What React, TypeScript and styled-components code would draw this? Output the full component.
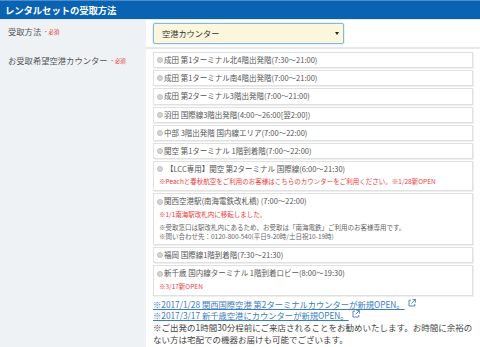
import * as React from "react";
import styled, { createGlobalStyle } from "styled-components";

const GlobalStyle = createGlobalStyle`
  html, body {
    margin: 0;
    padding: 0;
    background: #ffffff;
  }
  body {
    font-family: "Noto Sans CJK JP", "Noto Sans", sans-serif;
    color: #555;
  }
`;

const Page = styled.div`
  width: 480px;
  height: 347px;
  overflow: hidden;
  background: #fff;
`;

const Header = styled.div`
  height: 18px;
  border-top: 1px solid #4c8dcc;
  background: #0a63b2;
  color: #fff;
  font-size: 9.4px;
  font-weight: bold;
  line-height: 18px;
  padding-left: 5px;
  letter-spacing: -0.1px;
`;

const Row = styled.div<{ $first?: boolean }>`
  display: grid;
  grid-template-columns: 146px 1fr;
  border-top: ${(p) => (p.$first ? "1px solid #e6e9ec" : "2px solid #e6e9ec")};
`;

const Label = styled.div<{ $top: number }>`
  background: #eef2f5;
  padding: ${(p) => p.$top}px 0 0 8px;
  font-size: 8.3px;
  line-height: 12px;
  color: #555;
  min-height: 100%;
`;

const Required = styled.span`
  color: #e8302f;
  font-size: 5.4px;
  margin-left: 2px;
  vertical-align: 1px;
`;

const Cell = styled.div<{ $pad: string }>`
  padding: ${(p) => p.$pad};
`;

const Select = styled.div`
  position: relative;
  width: 181px;
  height: 19px;
  border: 1px solid #86b6e6;
  border-radius: 2px;
  box-shadow: 0 0 2px #a9cdf0;
  background: #fcf7dc;
  font-size: 8.2px;
  line-height: 19px;
  padding-left: 8px;
  color: #333;
  &::after {
    content: "";
    position: absolute;
    right: 4px;
    top: 8px;
    border-left: 2px solid transparent;
    border-right: 2px solid transparent;
    border-top: 3px solid #222;
  }
`;

const List = styled.div`
  display: flex;
  flex-direction: column;
  gap: 2px;
  width: 320px;
`;

const Box = styled.div`
  border: 1px solid #e0e0e0;
  box-shadow: 1px 1px 0 #efefef;
  background: #fff;
  padding: 0 0 0 3px;
`;

const Main = styled.div`
  display: flex;
  align-items: center;
  font-size: 7.5px;
  line-height: 14.2px;
  color: #555;
  white-space: nowrap;
`;

const Radio = styled.span<{ $spaced?: boolean }>`
  display: inline-block;
  width: 4px;
  height: 4px;
  border-radius: 50%;
  background: #d6d6d6;
  border: 1px solid #bdbdbd;
  margin-right: ${(p) => (p.$spaced ? "3px" : "1px")};
  flex: none;
`;

const RedNote = styled.div`
  color: #ea3b3b;
  font-size: 6.5px;
  line-height: 11px;
  padding-left: 2px;
  padding-bottom: 3px;
  white-space: nowrap;
`;

const GrayNotes = styled.div`
  color: #666;
  font-size: 6.5px;
  line-height: 9.3px;
  padding: 3px 0 3px 2px;
  white-space: nowrap;
`;

const Links = styled.div`
  margin-top: 3px;
  font-size: 8.3px;
  line-height: 11px;
`;

const Link = styled.a`
  display: block;
  color: #3b7cc0;
  text-decoration: underline;
  white-space: nowrap;
`;

const Note = styled.div`
  font-size: 8.5px;
  line-height: 12.5px;
  color: #444;
  width: 322px;
`;

const Ext = () => (
  <svg width="8" height="8" viewBox="0 0 8 8" style={{ marginLeft: 3, verticalAlign: 1 }}>
    <path d="M3 1.2H1v5.8h5.8V5" fill="none" stroke="#3b7cc0" strokeWidth="0.9" />
    <path d="M4.4 0.6h3v3M7.3 0.7L3.6 4.4" fill="none" stroke="#3b7cc0" strokeWidth="0.9" />
  </svg>
);

const simple1 = [
  "成田 第1ターミナル北4階出発階(7:30～21:00)",
  "成田 第1ターミナル南4階出発階(7:00～21:00)",
  "成田 第2ターミナル3階出発階(7:00～21:00)",
  "羽田 国際線3階出発階(4:00～26:00[翌2:00])",
  "中部 3階出発階 国内線エリア(7:00～22:00)",
  "関空 第1ターミナル 1階到着階(7:00～22:00)",
];

export default function App() {
  return (
    <Page>
      <GlobalStyle />
      <Header>レンタルセットの受取方法</Header>
      <Row $first>
        <Label $top={5}>
          受取方法<Required>・必須</Required>
        </Label>
        <Cell $pad="3px 0 3px 7px">
          <Select>空港カウンター</Select>
        </Cell>
      </Row>
      <Row>
        <Label $top={5}>
          お受取希望空港カウンター<Required>・必須</Required>
        </Label>
        <Cell $pad="3px 0 0 7px">
          <List>
            {simple1.map((t) => (
              <Box key={t}>
                <Main>
                  <Radio />
                  {t}
                </Main>
              </Box>
            ))}
            <Box>
              <Main>
                <Radio $spaced />
                【LCC専用】関空 第2ターミナル 国際線(6:00～21:30)
              </Main>
              <RedNote>※Peachと春秋航空をご利用のお客様はこちらのカウンターをご利用ください。※1/28新OPEN</RedNote>
            </Box>
            <Box>
              <Main>
                <Radio />
                関西空港駅(南海電鉄改札橋) (7:00～22:00)
              </Main>
              <RedNote style={{ paddingBottom: 0 }}>※1/1南海駅改札内に移転しました。</RedNote>
              <GrayNotes>
                ※受取窓口は駅改札内にあるため、お受取は「南海電鉄」ご利用のお客様専用です。
                <br />
                ※問い合わせ先：0120-800-540(平日9-20時/土日祝10-19時)
              </GrayNotes>
            </Box>
            <Box>
              <Main>
                <Radio />
                福岡 国際線1階到着階(7:30～21:30)
              </Main>
            </Box>
            <Box>
              <Main>
                <Radio />
                新千歳 国内線ターミナル 1階到着ロビー(8:00～19:30)
              </Main>
              <RedNote>※3/17新OPEN</RedNote>
            </Box>
          </List>
          <Links>
            <Link href="#">
              ※2017/1/28 関西国際空港 第2ターミナルカウンターが新規OPEN。
              <Ext />
            </Link>
            <Link href="#">
              ※2017/3/17 新千歳空港にカウンターが新規OPEN。
              <Ext />
            </Link>
          </Links>
          <Note>
            ※ご出発の1時間30分程前にご来店されることをお勧めいたします。お時間に余裕のない方は宅配での機器お届けも可能でございます。
          </Note>
        </Cell>
      </Row>
    </Page>
  );
}
